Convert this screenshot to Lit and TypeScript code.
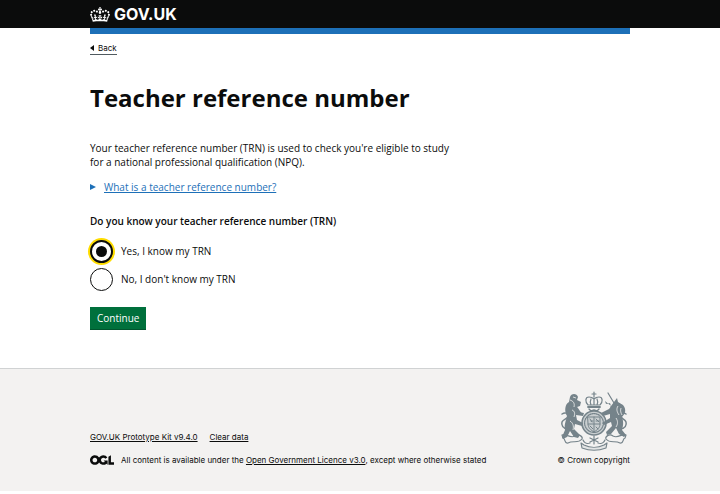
import { LitElement, html, svg, css } from "lit";
import { customElement, state } from "lit/decorators.js";

const crown = svg`<path fill="currentColor" fill-rule="evenodd" d="M25 30.2c3.5 1.5 7.7-.2 9.1-3.7 1.5-3.6-.2-7.8-3.9-9.2-3.6-1.4-7.6.3-9.1 3.9-1.4 3.5.3 7.5 3.9 9zM9 39.5c3.6 1.5 7.8-.2 9.1-3.7 1.5-3.6-.2-7.8-3.9-9.1-3.6-1.5-7.6.3-9.1 3.8-1.4 3.5.3 7.6 3.9 9zM4.4 57.2c3.5 1.5 7.7-.2 9.1-3.8 1.5-3.6-.2-7.7-3.9-9.1-3.5-1.5-7.6.3-9.1 3.8-1.4 3.5.3 7.6 3.9 9.1zm38.3-21.4c3.5 1.5 7.7-.2 9.1-3.8 1.5-3.6-.2-7.7-3.9-9.1-3.6-1.5-7.6.3-9.1 3.8-1.3 3.6.4 7.7 3.9 9.1zm64.4-5.6c-3.6 1.5-7.8-.2-9.1-3.7-1.5-3.6.2-7.8 3.8-9.2 3.6-1.4 7.7.3 9.2 3.9 1.3 3.5-.4 7.5-3.9 9zm15.9 9.3c-3.6 1.5-7.7-.2-9.1-3.7-1.5-3.6.2-7.8 3.7-9.1 3.6-1.5 7.7.2 9.2 3.8 1.5 3.5-.3 7.5-3.8 9zm4.7 17.7c-3.6 1.5-7.8-.2-9.2-3.8-1.5-3.6.2-7.7 3.9-9.1 3.6-1.5 7.7.3 9.2 3.8 1.3 3.5-.4 7.6-3.9 9.1zM89.3 35.8c-3.6 1.5-7.8-.2-9.2-3.8-1.4-3.6.2-7.7 3.9-9.1 3.6-1.5 7.7.3 9.2 3.8 1.4 3.6-.3 7.7-3.9 9.1zM69.7 17.7l8.9 4.7V9.3l-8.9 2.8c-.2-.3-.5-.6-.9-.9L72.4 0H59.6l3.5 11.2c-.3.3-.6.5-.9.9l-8.8-2.8v13.1l8.8-4.7c.3.3.6.7.9.9l-5 15.4v.1c-.2.8-.4 1.6-.4 2.4 0 4.1 3.1 7.5 7 8.1h.2c.3 0 .7.1 1 .1.4 0 .7 0 1-.1h.2c4-.6 7.1-4.1 7.1-8.1 0-.8-.1-1.7-.4-2.4V34l-5.1-15.4c.4-.2.7-.6 1-.9zM66 92.8c16.9 0 32.8 1.1 47.1 3.2 4-16.9 8.9-26.7 14-33.5l-9.6-3.4c1 4.9 1.1 7.2 0 10.2-1.5-1.4-3-4.3-4.2-8.7L108.6 76c2.8-2 5-3.2 7.5-3.3-4.4 9.4-10 11.9-13.6 11.2-4.3-.8-6.3-4.6-5.6-7.9 1-4.7 5.7-5.9 8-.5 4.3-8.7-3-11.4-7.6-8.8 7.1-7.2 7.9-13.5 2.1-21.1-8 6.1-8.1 12.3-4.5 20.8-4.7-5.4-12.1-2.5-9.5 6.2 3.4-5.2 7.9-2 7.2 3.1-.6 4.3-6.4 7.8-13.5 7.2-10.3-.9-10.9-8-11.2-13.8 2.5-.5 7.1 1.8 11 7.3L80.2 60c-4.1 4.4-8 5.3-12.3 5.4 1.4-4.4 8-11.6 8-11.6H55.5s6.4 7.2 7.9 11.6c-4.2-.1-8-1-12.3-5.4l1.4 16.4c3.9-5.5 8.5-7.7 10.9-7.3-.3 5.8-.9 12.8-11.1 13.8-7.2.6-12.9-2.9-13.5-7.2-.7-5 3.8-8.3 7.1-3.1 2.7-8.7-4.6-11.6-9.4-6.2 3.7-8.5 3.6-14.7-4.6-20.8-5.8 7.6-5 13.9 2.2 21.1-4.7-2.6-11.9.1-7.7 8.8 2.3-5.5 7.1-4.2 8.1.5.7 3.3-1.3 7.1-5.7 7.9-3.5.7-9-1.8-13.5-11.2 2.5.1 4.7 1.3 7.5 3.3l-4.7-15.4c-1.2 4.4-2.7 7.2-4.3 8.7-1.1-3-.9-5.3 0-10.2l-9.5 3.4c5 6.9 9.9 16.7 14 33.5 14.8-2.1 30.8-3.2 47.7-3.2z"/>`;

const ogl = svg`<path fill="currentColor" d="M421.5 142.8V.1l-50.7 32.3v161.1h112.4v-50.7zm-122.3-9.6A47.12 47.12 0 0 1 221 97.8c0-26 21.1-47.1 47.1-47.1 16.7 0 31.4 8.7 39.7 21.8l42.7-27.2A97.63 97.63 0 0 0 268.1 0c-36.5 0-68.3 20.1-85.1 49.7A98 98 0 0 0 97.8 0C43.9 0 0 43.9 0 97.8s43.9 97.8 97.8 97.8c36.5 0 68.3-20.1 85.1-49.7a97.76 97.76 0 0 0 149.6 25.4l19.4 22.2h3v-87.8h-80l24.3 27.5zM97.8 145c-26 0-47.1-21.1-47.1-47.1s21.1-47.1 47.1-47.1 47.1 21.1 47.1 47.1S123.8 145 97.8 145"/>`;

// Royal coat of arms: lion, crowned shield, unicorn, scroll beneath.
const crest = svg`
  <g fill="none" stroke="#75838a" stroke-linecap="round" stroke-linejoin="round">
    <g stroke-width="1.2">
      <path d="M29 14c-3-3-3-8 1-8 3 0 4 1 5 2 1-1 2-2 5-2 4 0 4 5 1 8zM35 7v7M32 8c-1 2-1 4 0 6M38 8c1 2 1 4 0 6"/>
      <path d="M35 1v5M33 3h4"/>
      <path d="M29 16h12" stroke-width="1.8"/>
    </g>
    <path d="M30 18l2 2 3-1 3 1 2-2" stroke-width="1.4"/>
    <circle cx="35" cy="32" r="12" fill="#c9ced0" stroke-width="1.6"/>
    <circle cx="35" cy="32" r="9.4" stroke-width="1.2" stroke-dasharray="1.2 1"/>
    <path d="M29 26h12v7c0 4-3 6-6 8-3-2-6-4-6-8zM35 26v15M29 33h12" stroke-width="1"/>
    <path d="M31 28l2 3M37 28l3 3M31 35l3 3M37 36l2 2M32 30h2M37 30h3" stroke-width="1"/>
    <path d="M9 38c-5 0-7-4-6-7s6-3 6-6-3-4-6-2" stroke-width="1.5"/>
    <path d="M61 38c5 0 7-4 6-7s-5-3-5-6 2-4 5-2" stroke-width="1.5"/>
    <path d="M3 44c4-2 8 4 13 1 4-3 8 1 7 3-4 5-9 1-14 4-4 1-2-4-5-5z" stroke-width="1.2"/>
    <path d="M67 44c-4-2-8 4-13 1-4-3-8 1-7 3 4 5 9 1 14 4 4 1 2-4 5-5z" stroke-width="1.2"/>
    <path d="M24 49c2 4 4 4 7 3M46 49c-2 4-4 4-7 3M35 45v8M31 47l8 4M39 47l-8 4" stroke-width="1.2"/>
    <path d="M22 52l3 2c6 3 14 3 20 0l3-2-1 5c-8 3-16 3-24 0z" fill="#e3e5e5" stroke-width="1.2"/>
    <path d="M55 12L49 2" stroke-width="1.2"/>
  </g>
  <g fill="#75838a">
    <path d="M11 6c1-4 7-4 8 0l-1 3 4 2-1 4-3 1c3 3 3 6 7 6l-1 3-7-1 1 5 6 3-1 3-7-2-1 5 6 6-2 3-4-1-4-6-3 6-4 2-1-2 3-7c-1-6 1-9 2-14-3-5-2-12 2-14z"/>
    <path d="M52 15l3-4 3-4 1 4 5 3c4 5 2 9-1 12 2 6 1 9 0 13l4 5-2 2-5-3-3-6-5 6-4 1-1-3 6-6-1-4-7 3-2-2 8-5v-4l-7 2-2-3 8-4c2-2 2-4 1-6l-4 1-1-3z"/>
  </g>
  <g fill="none" stroke="#f3f2f1" stroke-width="0.8">
    <path d="M11 9c3 1 5 3 4 7M13 19c3 1 3 4 2 7M11 30c3 2 4 5 3 9M14 6l3 1"/>
    <path d="M59 15c-2 3-1 6 1 9M62 17c-1 3 0 5 1 7M57 27c2 3 2 6 0 9"/>
  </g>`;

@customElement("app-root")
export class AppRoot extends LitElement {
  @state() private answer = "yes";

  static styles = css`
    :host {
      display: block;
      background: #fff;
      color: #0b0c0c;
      font: 10px/14px "Open Sans", "Noto Sans", sans-serif;
    }
    * { box-sizing: border-box; }
    a { color: inherit; text-underline-offset: 1px; }
    .container { max-width: 540px; margin: 0 auto; }
    .header { height: 28px; background: #0b0c0c; color: #fff; }
    .header .container { border-bottom: 6px solid #1d70b8; }
    .bar { height: 28px; }
    .logo {
      display: inline-flex; align-items: center; gap: 4px; height: 28px;
      font: 700 16px/20px Inter, sans-serif; text-decoration: none;
    }
    .crown { width: 20px; height: 15px; }
    .main { padding: 14px 0 38px; }
    .back {
      display: flex; align-items: center; gap: 4px; width: max-content;
      font: 8px/12px Inter, sans-serif; text-decoration: none;
      border-bottom: 1px solid #505a5f;
    }
    .back::before {
      content: ""; border: 3px solid transparent; border-left: 0; border-right: 4px solid #0b0c0c;
    }
    .title { margin: 27px 0; font-size: 24px; line-height: 32px; font-weight: 700; }
    .lead { margin: 0 0 11px; max-width: 370px; }
    .details { margin-bottom: 20px; }
    .summary {
      display: flex; align-items: center; gap: 8px; width: max-content;
      color: #1d70b8; cursor: pointer; list-style: none;
    }
    .summary::before {
      content: ""; border: 3px solid transparent; border-right: 0; border-left: 6px solid #1d70b8;
    }
    .summary-text { text-decoration: underline; text-underline-offset: 1px; }
    .question { border: 0; margin: 0; padding: 0; }
    .legend { padding: 0; margin-bottom: 11px; font-weight: 600; }
    .choices { display: grid; gap: 4px; }
    .choice { display: flex; align-items: center; gap: 8px; height: 24px; width: max-content; }
    .radio {
      appearance: none; display: grid; place-items: center; margin: 0;
      width: 23px; height: 23px; border: 1px solid #0b0c0c; border-radius: 50%; background: #fff;
    }
    .radio:checked { border-width: 2px; box-shadow: 0 0 0 2px #fd0; outline: 0; }
    .radio:checked::before {
      content: ""; width: 11px; height: 11px; border-radius: 50%; background: #0b0c0c;
    }
    .continue {
      display: block; margin-top: 16px; padding: 4px 7px; border: 0;
      border-bottom: 1px solid #00552e; background: #00703c; color: #fff; font: inherit;
    }
    .footer {
      border-top: 1px solid #d0d2d3; background: #f3f2f1; padding: 22px 0 25px;
      font: 8px/12px Inter, sans-serif;
    }
    .footer .container { display: flex; justify-content: space-between; align-items: flex-end; }
    .links { display: flex; gap: 12px; margin-bottom: 11px; }
    .licence { display: flex; align-items: center; gap: 7px; }
    .ogl { width: 24px; height: 10px; }
    .copyright { display: grid; justify-items: center; gap: 3px; text-decoration: none; }
    .crest { width: 70px; height: 60px; }
  `;

  private choice(value: string, label: string) {
    return html`<label class="choice">
      <input class="radio" type="radio" name="trn" .value=${value}
        .checked=${this.answer === value} @change=${() => (this.answer = value)} />
      <span>${label}</span>
    </label>`;
  }

  render() {
    return html`
      <header class="header">
        <div class="container">
          <div class="bar">
            <a class="logo" href="#"><svg class="crown" viewBox="0 0 132 97" aria-hidden="true">${crown}</svg>GOV.UK</a>
          </div>
        </div>
      </header>
      <div class="container">
        <main class="main">
          <a class="back" href="#">Back</a>
          <h1 class="title">Teacher reference number</h1>
          <p class="lead">Your teacher reference number (TRN) is used to check you're eligible to study for a national professional qualification (NPQ).</p>
          <details class="details">
            <summary class="summary"><span class="summary-text">What is a teacher reference number?</span></summary>
          </details>
          <form @submit=${(e: Event) => e.preventDefault()}>
            <fieldset class="question">
              <legend class="legend">Do you know your teacher reference number (TRN)</legend>
              <div class="choices">
                ${this.choice("yes", "Yes, I know my TRN")}
                ${this.choice("no", "No, I don't know my TRN")}
              </div>
            </fieldset>
            <button class="continue" type="submit">Continue</button>
          </form>
        </main>
      </div>
      <footer class="footer">
        <div class="container">
          <div>
            <div class="links"><a href="#">GOV.UK Prototype Kit v9.4.0</a><a href="#">Clear data</a></div>
            <div class="licence">
              <svg class="ogl" viewBox="0 0 483.2 195.7" aria-hidden="true">${ogl}</svg>
              <span>All content is available under the <a href="#">Open Government Licence v3.0</a>, except where otherwise stated</span>
            </div>
          </div>
          <a class="copyright" href="#"><svg class="crest" viewBox="0 0 70 60" aria-hidden="true">${crest}</svg>© Crown copyright</a>
        </div>
      </footer>`;
  }
}
